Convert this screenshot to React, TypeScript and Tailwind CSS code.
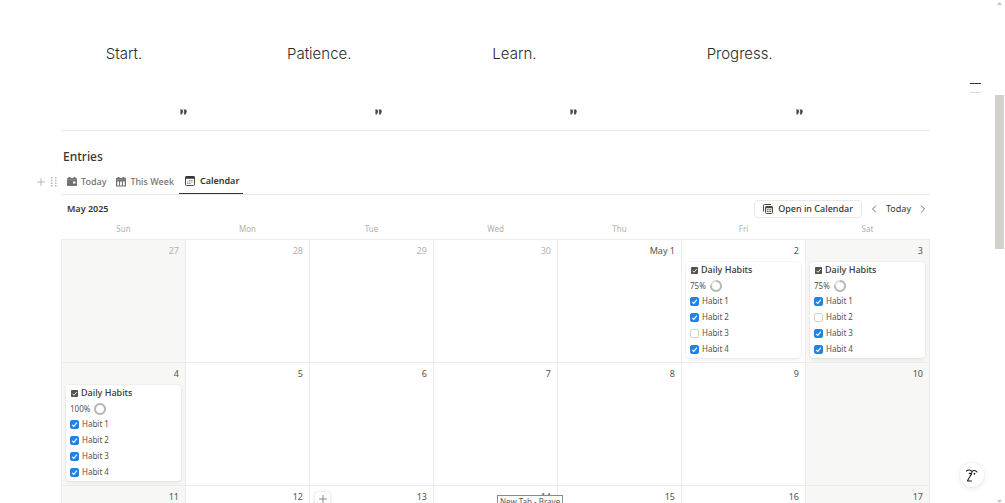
import { Plus, ChevronLeft, ChevronRight } from "lucide-react";

const quotes = ["Start.", "Patience.", "Learn.", "Progress."];
const weekdays = ["Sun", "Mon", "Tue", "Wed", "Thu", "Fri", "Sat"];

type Entry = { percent: number; habits: boolean[] };
type Day = { label: string; muted?: boolean; entry?: Entry };

const weeks: Day[][] = [
  [
    { label: "27", muted: true },
    { label: "28", muted: true },
    { label: "29", muted: true },
    { label: "30", muted: true },
    { label: "May 1" },
    { label: "2", entry: { percent: 75, habits: [true, true, false, true] } },
    { label: "3", entry: { percent: 75, habits: [true, false, true, true] } },
  ],
  [
    { label: "4", entry: { percent: 100, habits: [true, true, true, true] } },
    { label: "5" },
    { label: "6" },
    { label: "7" },
    { label: "8" },
    { label: "9" },
    { label: "10" },
  ],
  [
    { label: "11" },
    { label: "12" },
    { label: "13" },
    { label: "14" },
    { label: "15" },
    { label: "16" },
    { label: "17" },
  ],
];

function QuoteMark() {
  return (
    <svg viewBox="0 0 14 12" className="h-[6px] w-[7px]" fill="#4a4a4a" aria-hidden="true">
      <path d="M0 1h5l1.200 4L4 11H.5l1.100-3.500H0l1.200-3z" />
      <path d="M7.200 1h5l1.500 4-2.200 6H7.700l1.100-3.500H7.200l1.200-3z" />
    </svg>
  );
}

function DayIcon() {
  return (
    <svg viewBox="0 0 20 20" className="h-[10px] w-[10px]" aria-hidden="true">
      <path
        fill="#73726e"
        fillRule="evenodd"
        d="M3 0h4v2h6V0h4v2h1a2 2 0 0 1 2 2v12a2 2 0 0 1-2 2H2a2 2 0 0 1-2-2V4a2 2 0 0 1 2-2h1zM12 9v4h5V9z"
      />
      <path stroke="#a5a4a0" strokeWidth="1" d="M0 5.500h20" />
    </svg>
  );
}

function WeekIcon() {
  return (
    <svg viewBox="0 0 20 20" className="h-[10px] w-[10px]" aria-hidden="true">
      <path
        fill="#73726e"
        fillRule="evenodd"
        d="M3 0h4v2h6V0h4v2h3v17H0V2h3zM2.500 9v8H6V9zM8.200 9v8h3.600V9zM14 9v8h3.500V9z"
      />
      <path stroke="#a5a4a0" strokeWidth="1" d="M0 5.500h20" />
    </svg>
  );
}

function MonthIcon() {
  return (
    <svg viewBox="0 0 20 20" className="h-[10px] w-[10px]" fill="none" aria-hidden="true">
      <rect x="1" y="1" width="18" height="18" rx="2.500" stroke="#4b4944" strokeWidth="2" />
      <path d="M1 3h18" stroke="#37352f" strokeWidth="5" />
      <path d="M8 9h8M4 12h12M4 15h8" stroke="#8b8984" strokeWidth="1.800" strokeDasharray="2.500 1" />
    </svg>
  );
}

function StackedCalendarIcon() {
  return (
    <svg viewBox="0 0 20 20" className="h-[10px] w-[10px]" fill="none" aria-hidden="true">
      <path d="M1 15V3a2 2 0 0 1 2-2H16" stroke="#4b4944" strokeWidth="2" />
      <rect x="5" y="5" width="14" height="14" rx="2" stroke="#4b4944" strokeWidth="2" />
      <path d="M5 6.500h14" stroke="#4b4944" strokeWidth="4" />
      <path d="M7.500 11.500h9M7.500 15h9" stroke="#4b4944" strokeWidth="2" strokeDasharray="2.500 0.750" />
    </svg>
  );
}

function Ring({ percent }: { percent: number }) {
  const length = 2 * Math.PI * 5;
  return (
    <svg viewBox="0 0 12 12" className="h-3 w-3 -rotate-90 overflow-visible" fill="none" aria-hidden="true">
      <circle cx="6" cy="6" r="5" stroke="#dddcda" strokeWidth="2" />
      <circle
        cx="6"
        cy="6"
        r="5"
        stroke="#b9b8b4"
        strokeWidth="2"
        strokeDasharray={`${(length * percent) / 100} ${length}`}
      />
    </svg>
  );
}

function Habit({ id, name, done }: { id: string; name: string; done: boolean }) {
  return (
    <label htmlFor={id} className="flex h-4 items-center gap-[3px] text-[8px] text-[#55534e]">
      <span className="grid">
        <input
          id={id}
          type="checkbox"
          defaultChecked={done}
          className="peer col-start-1 row-start-1 h-[9px] w-[9px] appearance-none rounded-[2px] border border-[#d3d2cf] bg-white checked:border-[#2383e2] checked:bg-[#2383e2]"
        />
        <svg
          viewBox="0 0 9 9"
          className="pointer-events-none invisible col-start-1 row-start-1 h-[9px] w-[9px] peer-checked:visible"
          fill="none"
          stroke="white"
          strokeWidth="1.100"
          aria-hidden="true"
        >
          <path d="M2.200 4.800 3.800 6.400 6.900 2.600" />
        </svg>
      </span>
      {name}
    </label>
  );
}

function EntryCard({ day, entry }: { day: string; entry: Entry }) {
  return (
    <article className="mx-1 rounded bg-white px-1 pb-px shadow-[0_0_0_1px_rgba(15,15,15,0.03),0_2px_4px_rgba(15,15,15,0.06)]">
      <h3 className="flex h-4 items-center gap-[3px] pl-px text-[9px] font-medium text-[#37352f]">
        <svg viewBox="0 0 14 14" className="h-[7px] w-[7px]" fill="none" aria-hidden="true">
          <rect width="14" height="14" rx="1.500" fill="#55534e" />
          <path d="M3 7.500 6 10.500 11.500 4" stroke="white" strokeWidth="1.800" />
        </svg>
        {"Daily Habits"}
      </h3>
      <p className="flex h-[15px] items-center gap-1 text-[8px] text-[#55534e]">
        {`${entry.percent}%`}
        <Ring percent={entry.percent} />
      </p>
      {entry.habits.map((done, i) => (
        <Habit key={i} id={`day-${day}-habit-${i + 1}`} name={`Habit ${i + 1}`} done={done} />
      ))}
    </article>
  );
}

export default function App() {
  return (
    <div className="relative h-screen overflow-hidden bg-white font-['Noto_Sans','Open_Sans',sans-serif] text-[#37352f]">
      <main className="mr-[75px] ml-[61px]">
        <section className="grid grid-cols-[195fr_195fr_225fr_253fr] border-b border-[#e9e9e7] pt-11 pb-[13px]">
          {quotes.map((quote) => (
            <blockquote key={quote} className="w-[126px]">
              <p className="text-center font-['Inter',sans-serif] text-[15px] leading-5 font-light text-[#2b2b2b]">
                {quote}
              </p>
              <div className="flex justify-end pt-[45px] pb-[2px]">
                <QuoteMark />
              </div>
            </blockquote>
          ))}
        </section>

        <h2 className="pt-4 pl-[2px] text-[12px] leading-5 font-medium">Entries</h2>

        <nav className="mt-[2px] -ml-[26px] flex items-stretch" aria-label="Views">
          <div className="flex h-[26px] w-[26px] items-center gap-1 text-[#b9b8b4]">
            <button type="button" aria-label="Add block">
              <Plus className="h-3 w-3" />
            </button>
            <button type="button" aria-label="Drag block">
              <svg viewBox="0 0 6 10" className="h-[10px] w-[6px]" fill="currentColor" aria-hidden="true">
                <path d="M0 0h1.500v1.500H0zM4 0h1.500v1.500H4zM0 2.700h1.500v1.500H0zM4 2.700h1.500v1.500H4zM0 5.400h1.500v1.500H0zM4 5.400h1.500v1.500H4zM0 8.100h1.500v1.500H0zM4 8.100h1.500v1.500H4z" />
              </svg>
            </button>
          </div>
          <div className="flex grow border-b border-[#e9e9e7] text-[9px] font-medium text-[#73726e]">
            <button type="button" className="flex items-center gap-1 pr-[5px] pl-[6px]">
              <DayIcon />
              Today
            </button>
            <button type="button" className="flex items-center gap-1 px-[5px]">
              <WeekIcon />
              This Week
            </button>
            <button
              type="button"
              className="flex items-center gap-[5px] border-b border-[#37352f] pr-1 pl-[6px] font-semibold text-[#37352f]"
            >
              <MonthIcon />
              Calendar
            </button>
          </div>
        </nav>

        <div className="flex h-7 items-center justify-between pr-px pl-[6px] text-[9px]">
          <h3 className="font-semibold">May 2025</h3>
          <div className="flex items-center">
            <button
              type="button"
              className="mr-[6px] flex h-[18px] items-center gap-[5px] rounded border border-[#e9e9e7] px-2 font-medium"
            >
              <StackedCalendarIcon />
              Open in Calendar
            </button>
            <button type="button" aria-label="Previous month">
              <ChevronLeft className="h-3 w-3 text-[#73726e]" />
            </button>
            <button type="button" className="px-[6px]">
              Today
            </button>
            <button type="button" aria-label="Next month">
              <ChevronRight className="h-3 w-3 text-[#73726e]" />
            </button>
          </div>
        </div>

        <table className="w-full table-fixed border-collapse">
          <thead>
            <tr className="h-4 text-[8px] leading-3 text-[#b3b2ae]">
              {weekdays.map((day) => (
                <th key={day} scope="col" className="p-0 pb-1 font-normal">
                  {day}
                </th>
              ))}
            </tr>
          </thead>
          <tbody>
            {weeks.map((week, w) => (
              <tr key={w} className="h-[123px]">
                {week.map((day, d) => (
                  <td
                    key={day.label}
                    className={`border border-[#ececea] p-0 align-top ${d === 0 || d === 6 ? "bg-[#f7f7f5]" : ""}`}
                  >
                    <div className="flex h-[22px] items-center justify-between pr-[6px] pl-1 text-[9px]">
                      {day.label === "13" ? (
                        <button
                          type="button"
                          aria-label="Add entry"
                          className="mt-1 flex h-[17px] w-[17px] items-center justify-center rounded border border-[#f1f1ef] bg-white text-[#8b8984] shadow-sm"
                        >
                          <Plus className="h-3 w-3" />
                        </button>
                      ) : (
                        <span />
                      )}
                      <span className={day.muted ? "text-[#b3b2ae]" : "text-[#55534e]"}>{day.label}</span>
                    </div>
                    {day.entry && <EntryCard day={day.label} entry={day.entry} />}
                  </td>
                ))}
              </tr>
            ))}
          </tbody>
        </table>
      </main>

      <div
        role="tooltip"
        className="absolute top-[495px] left-[497px] border border-[#8a8a8a] bg-white px-[2px] text-[8px] leading-3 whitespace-nowrap text-[#575757]"
      >
        New Tab - Brave
      </div>

      <div className="absolute top-[83px] right-6 flex w-[11px] flex-col gap-2" aria-hidden="true">
        <span className="h-px bg-[#37352f]" />
        <span className="h-px bg-[#dddcda]" />
      </div>

      <button
        type="button"
        aria-label="Assistant"
        className="absolute right-[21px] bottom-4 flex h-6 w-6 items-center justify-center rounded-full bg-white shadow-[0_0_0_1px_rgba(15,15,15,0.03),0_2px_6px_rgba(15,15,15,0.08)]"
      >
        <svg viewBox="0 0 24 26" className="h-[13px] w-3" fill="none" stroke="#1f1f1f" strokeWidth="2.200" strokeLinecap="round" aria-hidden="true">
          <path d="M1 4C4 1 9 1 12 5C14 2 19 2 22 6M12 5C12 10 10 12 8 15S4 21 3 24h8" />
          <path d="M7 9h2M17 9v1" strokeWidth="3" />
        </svg>
      </button>

      <div className="absolute inset-y-0 right-0 w-[11px]" aria-hidden="true">
        <svg viewBox="0 0 5 3" className="absolute top-[2px] left-[3px] h-[3px] w-[5px]" fill="#c4c3bf">
          <path d="M0 3 2.500 0 5 3z" />
        </svg>
        <div className="absolute top-[95px] left-px h-[154px] w-[9px] bg-[#d3d1cb]" />
        <svg viewBox="0 0 5 3" className="absolute bottom-0 left-[3px] h-[3px] w-[5px]" fill="#c4c3bf">
          <path d="M0 0h5L2.500 3z" />
        </svg>
      </div>
    </div>
  );
}
